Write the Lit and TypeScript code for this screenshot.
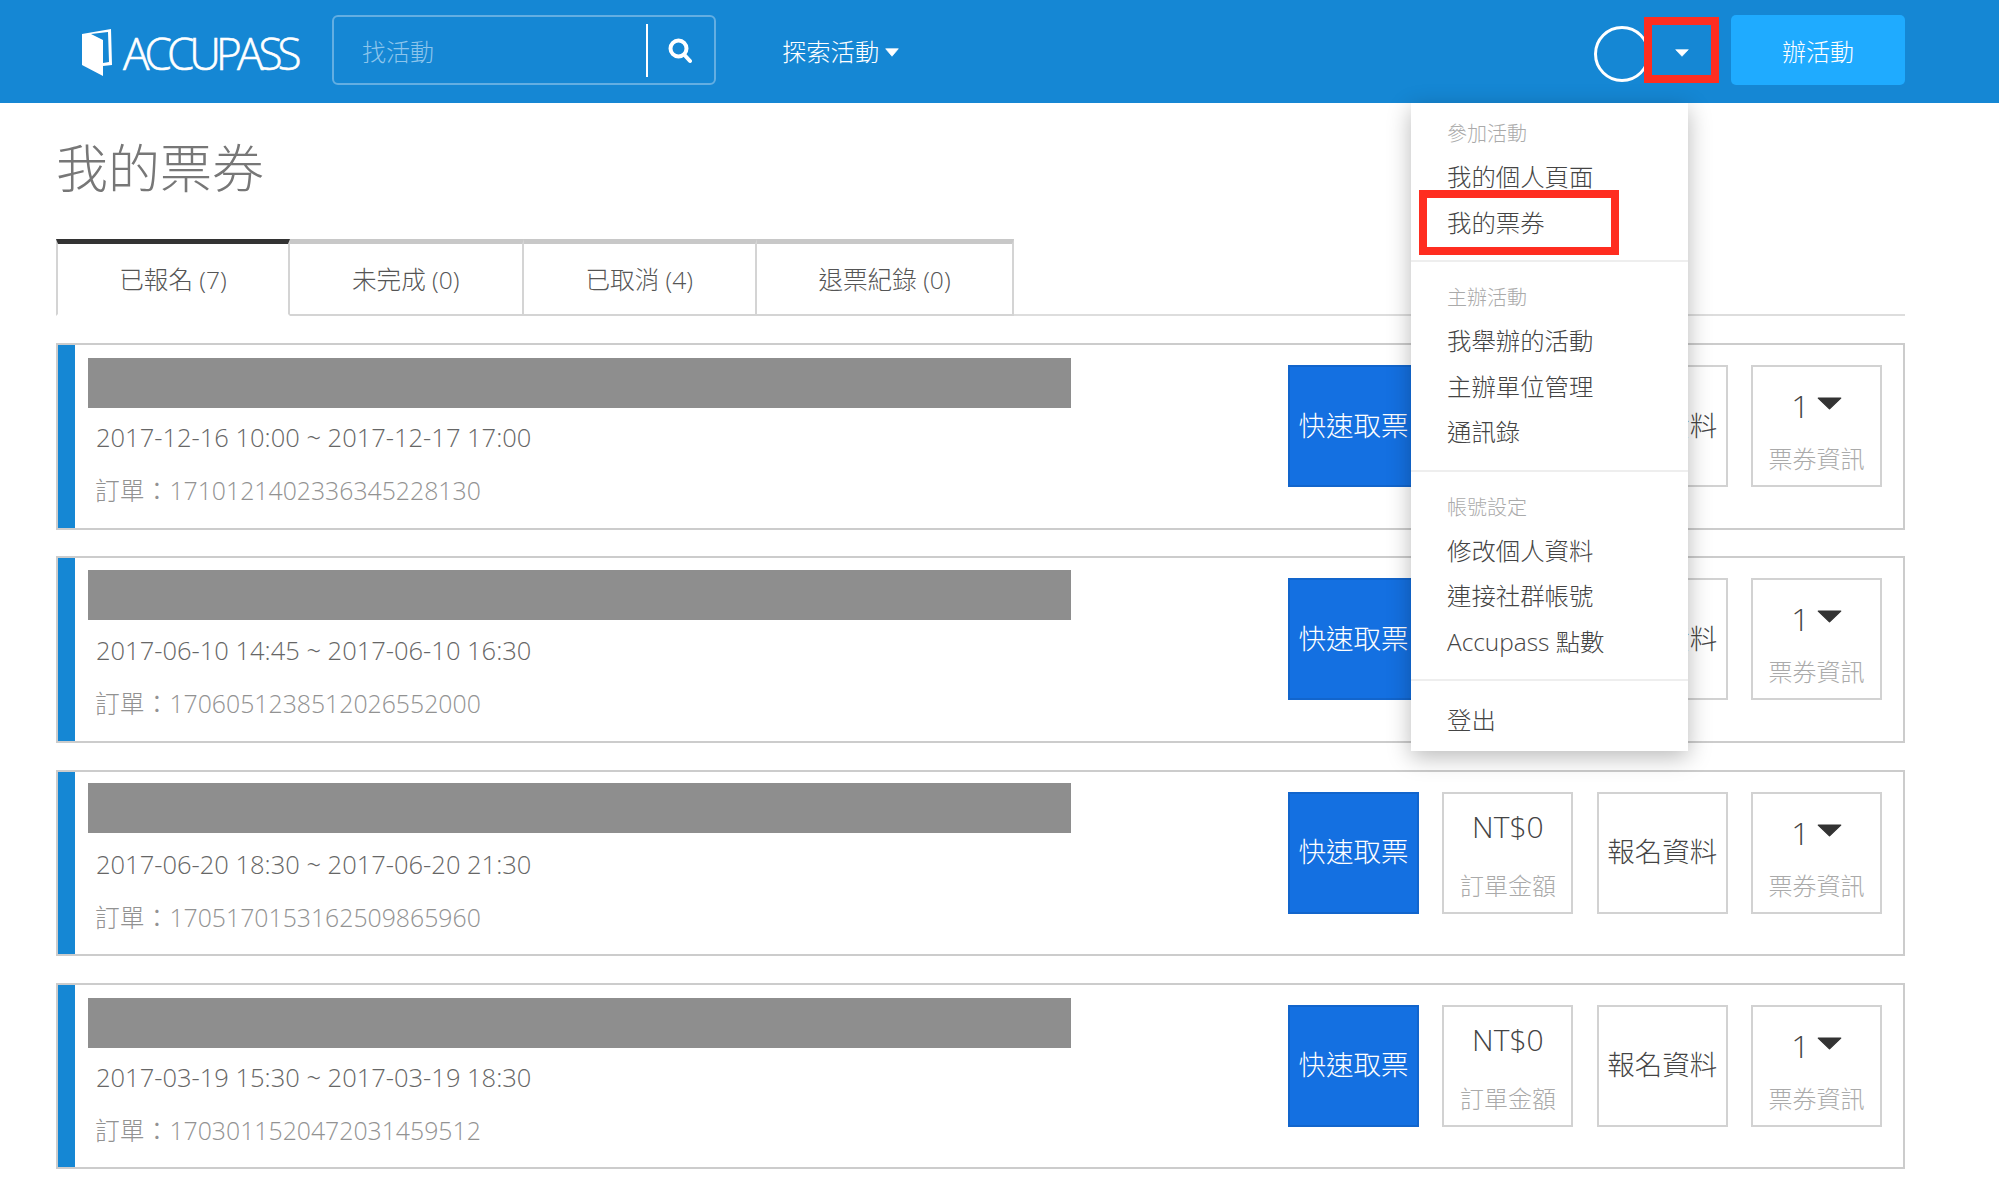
import { LitElement, html, css } from "lit";
import { customElement } from "lit/decorators.js";

const CARDS = [
  { date: "2017-12-16 10:00 ~ 2017-12-17 17:00", order: "1710121402336345228130", lift: 2 },
  { date: "2017-06-10 14:45 ~ 2017-06-10 16:30", order: "1706051238512026552000", lift: 1 },
  { date: "2017-06-20 18:30 ~ 2017-06-20 21:30", order: "1705170153162509865960", lift: 0 },
  { date: "2017-03-19 15:30 ~ 2017-03-19 18:30", order: "1703011520472031459512", lift: 2 },
];
const TABS = ["已報名 (7)", "未完成 (0)", "已取消 (4)", "退票紀錄 (0)"];
const MENU = [
  { label: "參加活動", items: ["我的個人頁面", "我的票券"] },
  { label: "主辦活動", items: ["我舉辦的活動", "主辦單位管理", "通訊錄"] },
  { label: "帳號設定", items: ["修改個人資料", "連接社群帳號", "Accupass 點數"] },
];

@customElement("app-root")
export class AppRoot extends LitElement {
  static styles = css`
    :host {
      display: block;
      position: relative;
      min-height: 1188px;
      background: #fff;
      overflow: hidden;
      font-family: "Open Sans", "Noto Sans CJK TC", sans-serif;
      font-weight: 300;
      color: #444;
    }
    .header {
      height: 103px;
      background: #1587d4;
      display: flex;
      align-items: center;
      padding: 0 94px 3px 82px;
      box-sizing: border-box;
      color: #fff;
    }
    .logo { display: flex; align-items: center; width: 250px; flex: none; height: 60px; margin-top: 6px; }
    .logo svg { display: block; flex: none; }
    .logo-text {
      font-family: "Open Sans", sans-serif;
      font-size: 44px;
      font-weight: 300;
      letter-spacing: -4.9px;
      margin-left: 11px;
      line-height: 60px;
      color: #fff;
      -webkit-text-stroke: 0.6px #fff;
    }
    .search {
      width: 384px;
      height: 70px;
      box-sizing: border-box;
      border: 2px solid #63aee2;
      border-radius: 6px;
      display: flex;
      align-items: center;
      flex: none;
    }
    .search-ph { flex: 1; padding-left: 28px; font-size: 24px; color: #8cc5ec; }
    .search-sep { width: 2px; height: 53px; background: #fff; flex: none; }
    .search-btn { width: 64px; padding-top: 2px; display: flex; justify-content: center; flex: none; margin-right: 2px; }
    .nav { margin-left: 66px; font-size: 24.3px; display: flex; align-items: center; gap: 6px; }
    .nav svg { margin-top: 4px; }
    .spacer { flex: 1; }
    .avatar {
      width: 56px;
      height: 56px;
      border: 3px solid #fff;
      border-radius: 50%;
      box-sizing: border-box;
      flex: none;
      margin-top: 8px;
    }
    .user-caret { width: 81px; display: flex; justify-content: center; padding-right: 17px; box-sizing: border-box; flex: none; margin-top: 5px; }
    .create {
      width: 174px;
      height: 70px;
      background: #1fabff;
      border-radius: 5px;
      display: flex;
      align-items: center;
      justify-content: center;
      font-size: 24px;
      color: #fff;
      flex: none;
    }
    .main { padding: 0 94px 0 56px; }
    h1 {
      margin: 0;
      height: 136px;
      display: flex;
      align-items: center;
      padding-bottom: 12px;
      box-sizing: border-box;
      font-size: 52px;
      font-weight: 300;
      color: #777;
    }
    .tabs {
      display: flex;
      height: 77px;
      border-bottom: 2px solid #ddd;
      box-sizing: border-box;
      margin-bottom: 27px;
    }
    .tab {
      box-sizing: border-box;
      height: 77px;
      padding-bottom: 2px;
      border-top: 5px solid #c8c8c8;
      border-right: 2px solid #d4d4d4;
      border-bottom: 2px solid #d4d4d4;
      display: flex;
      align-items: center;
      justify-content: center;
      font-size: 24.6px;
      color: #555;
      width: 233.5px;
      flex: none;
    }
    .tab.last { width: 257px; }
    .tab.active {
      border-top-color: #333;
      border-left: 2px solid #d4d4d4;
      border-bottom-color: #fff;
      width: 234px;
    }
    .cards { display: flex; flex-direction: column; gap: 26.83px; }
    .card {
      height: 186.5px;
      box-sizing: border-box;
      border: 2px solid #ccc;
      display: flex;
    }
    .stripe { width: 17px; background: #1587d4; flex: none; }
    .info { width: 983px; margin-left: 13px; padding-top: 11px; flex: none; }
    .bar { height: 50px; background: #8e8e8e; }
    .date { padding: 12px 0 0 8px; font-size: 25.5px; line-height: 34px; color: #666; }
    .order { padding: 19px 0 0 7px; font-size: 24.8px; line-height: 34px; color: #929292; }
    .actions {
      margin-left: auto;
      margin-right: 21px;
      margin-top: 20px;
      display: flex;
      gap: 23.3px;
      align-items: flex-start;
    }
    .box {
      width: 131px;
      height: 122px;
      box-sizing: border-box;
      border: 2px solid #d2d2d2;
      display: flex;
      flex-direction: column;
      align-items: center;
      justify-content: center;
      padding-bottom: 5px;
      font-size: 27.5px;
      color: #444;
    }
    .box.primary { background: #1470e1; border-color: #1265cc; color: #fff; }
    .box.stat { justify-content: flex-start; padding: 15px 0 0; }
    .val { font-size: 30px; line-height: 36px; height: 36px; display: flex; align-items: center; gap: 7px; }
    .val.qty { margin-top: 6px; font-size: 32px; }
    .qty svg { margin-top: -5px; }
    .sub { font-size: 24px; line-height: 34px; color: #aaa; margin-top: 24px; }
    .val.qty + .sub { margin-top: 18px; }
    .menu {
      position: absolute;
      left: 1411px;
      top: 103px;
      width: 277px;
      height: 648px;
      background: #fff;
      box-shadow: 0 6px 22px rgba(0, 0, 0, 0.28);
    }
    .group { border-bottom: 2px solid #eee; padding: 11px 0 15px; }
    .group + .group { padding-top: 16px; }
    .group.end { border-bottom: 0; padding: 16px 0 0; }
    .label { height: 40px; line-height: 40px; padding-left: 36px; font-size: 20px; color: #aaa; }
    .item { height: 45.5px; line-height: 45.5px; padding-left: 36px; font-size: 24.4px; color: #444; }
    .mark { position: absolute; border: 8px solid #ff2d20; box-sizing: border-box; }
    .mark.user { left: 1644px; top: 17px; width: 75px; height: 66px; }
    .mark.tickets { left: 1419px; top: 190px; width: 200px; height: 65px; }
  `;

  private caret(w: number, h: number, color: string) {
    return html`<svg width=${w} height=${h} viewBox="0 0 20 12" preserveAspectRatio="none"><path d="M1 1h18L10 11z" fill=${color} stroke=${color} stroke-linejoin="round"></path></svg>`;
  }

  render() {
    return html`
      <div class="header">
        <div class="logo">
          <svg width="30" height="48" viewBox="82 30 30 48">
            <path fill="#fff" fill-rule="evenodd" d="M82 35L111 30L112 66L103 67V77L82 66ZM91 35L103 41V64L109 63L108 33Z"></path>
          </svg>
          <span class="logo-text">ACCUPASS</span>
        </div>
        <div class="search">
          <span class="search-ph">找活動</span>
          <span class="search-sep"></span>
          <span class="search-btn">
            <svg width="24" height="26" viewBox="0 0 24 26" fill="none" stroke="#fff">
              <circle cx="10.5" cy="10.5" r="8" stroke-width="4"></circle>
              <path d="M16.5 17L22 23" stroke-width="4" stroke-linecap="round"></path>
            </svg>
          </span>
        </div>
        <div class="nav">探索活動 ${this.caret(14, 9, "#fff")}</div>
        <div class="spacer"></div>
        <div class="avatar"></div>
        <div class="user-caret">${this.caret(14, 8, "#fff")}</div>
        <div class="create">辦活動</div>
      </div>
      <div class="main">
        <h1>我的票券</h1>
        <div class="tabs">
          ${TABS.map(
            (t, i) =>
              html`<div class="tab ${i === 0 ? "active" : ""} ${i === 3 ? "last" : ""}">${t}</div>`
          )}
        </div>
        <div class="cards">
          ${CARDS.map(
            (c) => html`
              <div class="card">
                <div class="stripe"></div>
                <div class="info">
                  <div class="bar" style="margin-top:${c.lift}px;margin-bottom:${2 - c.lift}px"></div>
                  <div class="date">${c.date}</div>
                  <div class="order">訂單：${c.order}</div>
                </div>
                <div class="actions">
                  <div class="box primary">快速取票</div>
                  <div class="box stat">
                    <div class="val">NT$0</div>
                    <div class="sub">訂單金額</div>
                  </div>
                  <div class="box">報名資料</div>
                  <div class="box stat">
                    <div class="val qty">1 ${this.caret(25, 13, "#333")}</div>
                    <div class="sub">票券資訊</div>
                  </div>
                </div>
              </div>
            `
          )}
        </div>
      </div>
      <div class="menu">
        ${MENU.map(
          (g) => html`
            <div class="group">
              <div class="label">${g.label}</div>
              ${g.items.map((it) => html`<div class="item">${it}</div>`)}
            </div>
          `
        )}
        <div class="group end"><div class="item">登出</div></div>
      </div>
      <div class="mark user"></div>
      <div class="mark tickets"></div>
    `;
  }
}
